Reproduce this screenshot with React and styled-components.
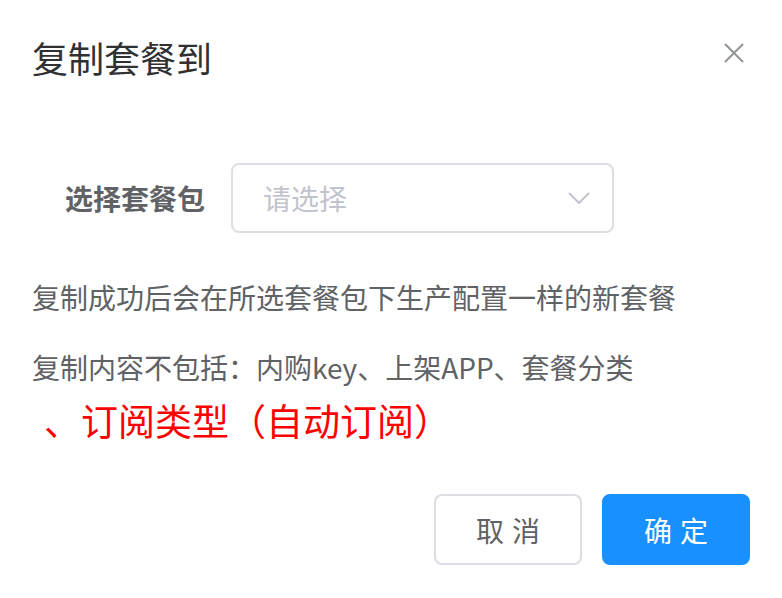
import React from "react";
import styled, { createGlobalStyle } from "styled-components";

const GlobalStyle = createGlobalStyle`
    html, body {
        margin: 0;
        padding: 0;
        background: #ffffff;
    }
    body {
        font-family: "Noto Sans CJK SC", "Noto Sans", "Liberation Sans", sans-serif;
    }
`;

const Dialog = styled.div`
    width: 782px;
    height: 598px;
    box-sizing: border-box;
    background: #fff;
    display: flex;
    flex-direction: column;
    padding: 0 32px;
`;

const Header = styled.div`
    display: flex;
    justify-content: space-between;
    align-items: flex-start;
    padding-top: 33px;
`;

const Title = styled.div`
    font-size: 36px;
    line-height: 48px;
    color: #303133;
`;

const CloseButton = styled.button`
    border: none;
    background: none;
    padding: 0;
    margin-top: 6px;
    margin-right: 2px;
    width: 28px;
    height: 28px;
    display: flex;
    align-items: center;
    justify-content: center;
    color: #909399;
    cursor: pointer;
`;

const FormRow = styled.div`
    display: flex;
    align-items: center;
    margin-top: 82px;
`;

const Label = styled.label`
    width: 199px;
    box-sizing: border-box;
    padding-right: 26px;
    text-align: right;
    font-size: 28px;
    font-weight: 700;
    color: #606266;
`;

const Select = styled.div`
    width: 383px;
    height: 70px;
    box-sizing: border-box;
    border: 2px solid #dcdfe6;
    border-radius: 8px;
    display: flex;
    align-items: center;
    justify-content: space-between;
    padding: 0 22px 0 30px;
`;

const Placeholder = styled.span`
    font-size: 28px;
    color: #c0c4cc;
`;

const Note = styled.p`
    margin: ${(p) => p.$top}px 0 0;
    padding-left: ${(p) => (p.$red ? 12 : 0)}px;
    font-size: ${(p) => (p.$red ? 37 : 28)}px;
    line-height: ${(p) => (p.$red ? 48 : 40)}px;
    color: ${(p) => (p.$red ? "#ff0000" : "#606266")};
    white-space: nowrap;
`;

const Footer = styled.div`
    display: flex;
    justify-content: flex-end;
    gap: 20px;
    margin-top: 50px;
`;

const Button = styled.button`
    width: 148px;
    height: 71px;
    box-sizing: border-box;
    border-radius: 8px;
    font-family: inherit;
    font-size: 28px;
    letter-spacing: 8px;
    text-indent: 8px;
    border: 2px solid ${(p) => (p.$primary ? "#1890ff" : "#dcdfe6")};
    background: ${(p) => (p.$primary ? "#1890ff" : "#fff")};
    color: ${(p) => (p.$primary ? "#fff" : "#606266")};
    cursor: pointer;
`;

const App = () => {
    return (
        <>
            <GlobalStyle />
            <Dialog>
                <Header>
                    <Title>复制套餐到</Title>
                    <CloseButton aria-label="关闭">
                        <svg width="22" height="22" viewBox="0 0 22 22">
                            <path
                                d="M2 2L20 20M20 2L2 20"
                                stroke="currentColor"
                                strokeWidth="2"
                                fill="none"
                            />
                        </svg>
                    </CloseButton>
                </Header>
                <FormRow>
                    <Label>选择套餐包</Label>
                    <Select>
                        <Placeholder>请选择</Placeholder>
                        <svg width="22" height="12" viewBox="0 0 22 12">
                            <path
                                d="M1 1L11 11L21 1"
                                stroke="#c0c4cc"
                                strokeWidth="2"
                                fill="none"
                            />
                        </svg>
                    </Select>
                </FormRow>
                <Note $top={44}>复制成功后会在所选套餐包下生产配置一样的新套餐</Note>
                <Note $top={30}>复制内容不包括：内购key、上架APP、套餐分类</Note>
                <Note $top={9} $red>、订阅类型（自动订阅）</Note>
                <Footer>
                    <Button>取消</Button>
                    <Button $primary>确定</Button>
                </Footer>
            </Dialog>
        </>
    );
};

export default App;
